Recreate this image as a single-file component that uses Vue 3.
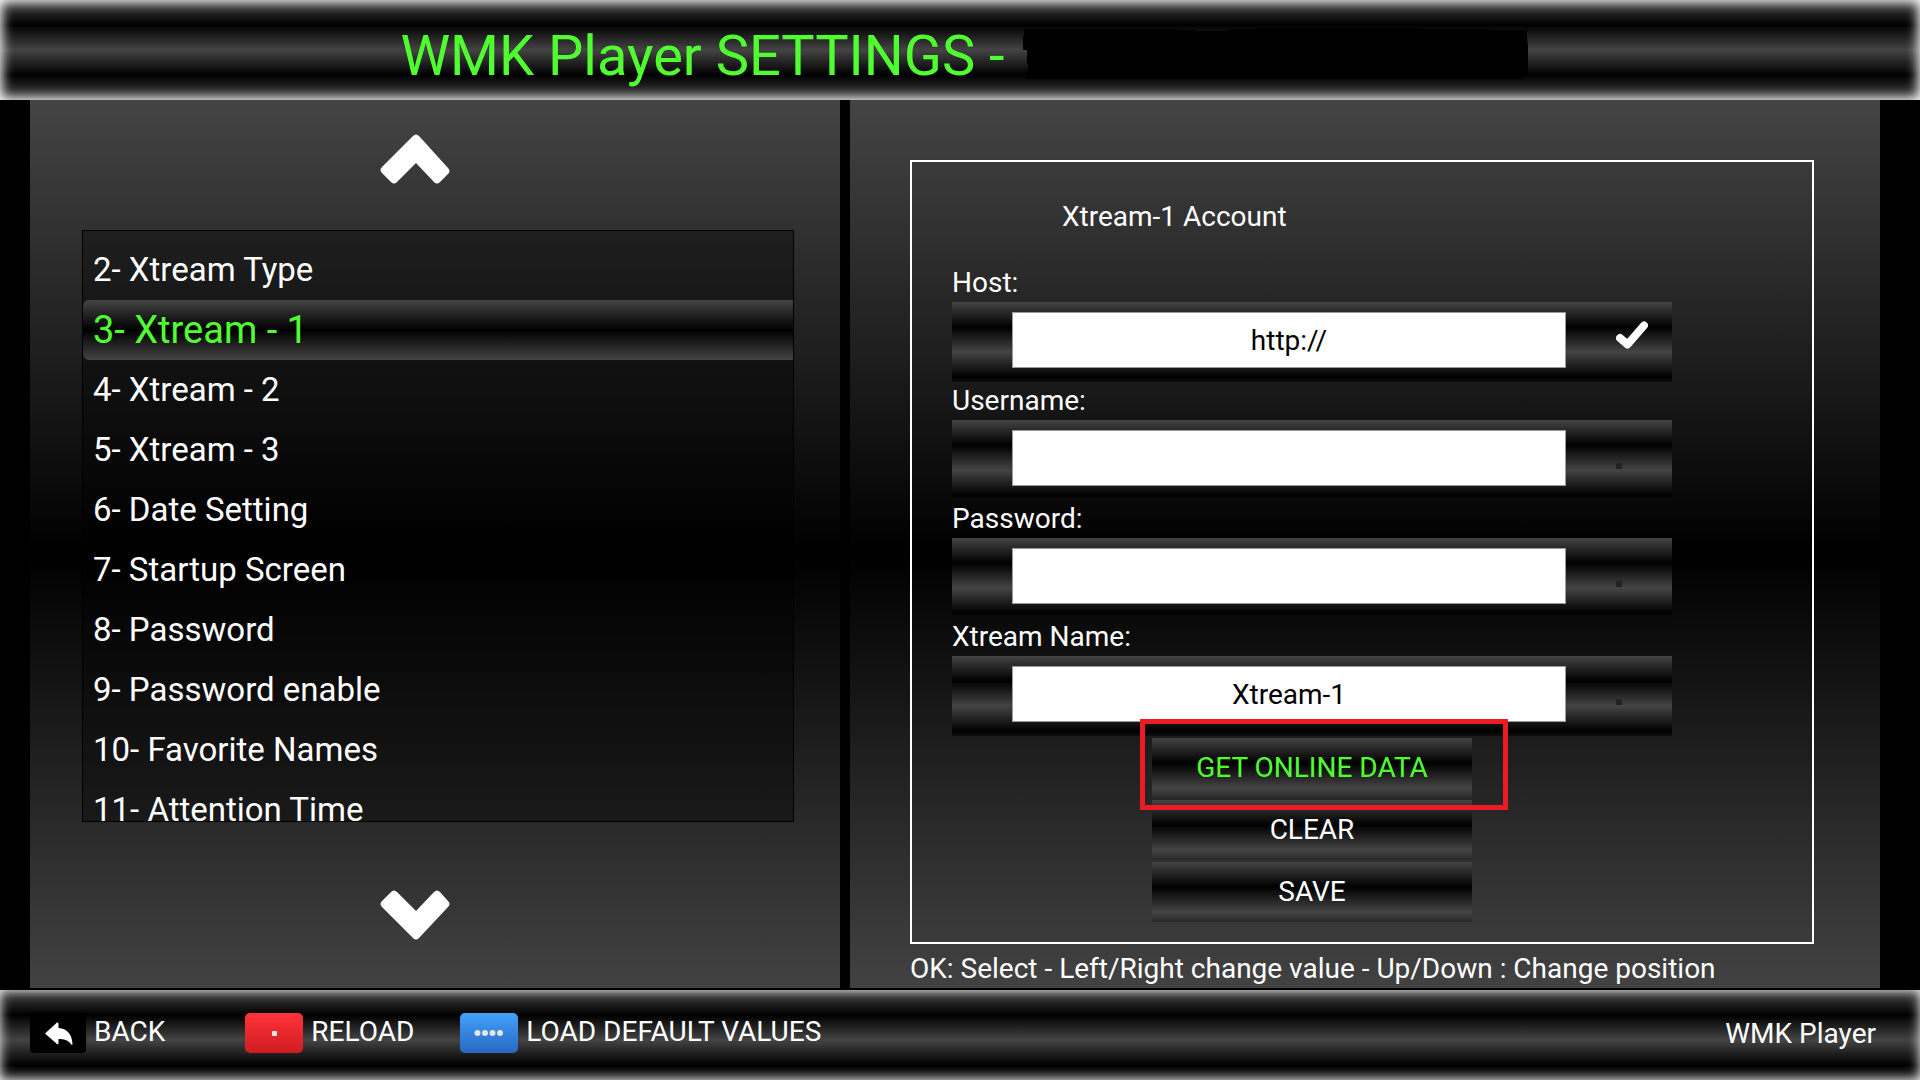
<script setup>
import { ref } from 'vue'

const items = [
  '2- Xtream Type',
  '3- Xtream - 1',
  '4- Xtream - 2',
  '5- Xtream - 3',
  '6- Date Setting',
  '7- Startup Screen',
  '8- Password',
  '9- Password enable',
  '10- Favorite Names',
  '11- Attention Time',
]
const selected = ref(1)

const fields = ref([
  { id: 'host', label: 'Host:', value: 'http://', checked: true },
  { id: 'username', label: 'Username:', value: '', checked: false },
  { id: 'password', label: 'Password:', value: '', checked: false },
  { id: 'name', label: 'Xtream Name:', value: 'Xtream-1', checked: false },
])
</script>

<template>
  <div class="screen">
    <header class="bar header">
      <h1>WMK Player SETTINGS -</h1>
      <svg class="redaction" viewBox="0 0 505 52" aria-hidden="true">
        <path d="M1 1H155V2H172V3H202V2H207V1H234V0H398V1H466V2H504V10L505 18V43Q503 48 498 51H3V43H5V36H4V22H0V8H1Z" fill="#000" />
      </svg>
    </header>

    <main class="panels">
      <section class="panel side">
        <button class="arrow" aria-label="Scroll up">
          <svg viewBox="0 0 70 50"><path d="M33 2Q36 -1 39 2L68 34Q71 37 68 40L60 48Q57 51 54 48L36 29L17 48Q14 51 11 48L2 39Q-1 36 2 33Z" /></svg>
        </button>
        <ul class="list">
          <li v-for="(item, i) in items" :key="item">
            <button class="item" :class="{ active: i === selected }" @click="selected = i">{{ item }}</button>
          </li>
        </ul>
        <button class="arrow" aria-label="Scroll down">
          <svg viewBox="0 0 70 50"><path d="M33 48Q36 51 39 48L68 17Q71 14 68 11L60 2Q57 -1 54 2L36 21L17 2Q14 -1 11 2L2 11Q-1 14 2 17Z" /></svg>
        </button>
      </section>

      <section class="panel detail">
        <form class="frame" @submit.prevent>
          <h2>Xtream-1 Account</h2>
          <div v-for="f in fields" :key="f.id" class="field">
            <label :for="f.id">{{ f.label }}</label>
            <div class="strip">
              <input :id="f.id" v-model="f.value" type="text" autocomplete="off" />
              <svg v-if="f.checked" class="tick" viewBox="0 0 32 28"><path d="M4 17L11.500 23.500L28 4.500" /></svg>
              <span v-else class="dot"></span>
            </div>
          </div>
          <div class="actions">
            <div class="marked">
              <button class="action active">GET ONLINE DATA</button>
            </div>
            <button class="action">CLEAR</button>
            <button class="action">SAVE</button>
          </div>
        </form>
        <p class="hint">OK: Select - Left/Right change value - Up/Down : Change position</p>
      </section>
    </main>

    <footer class="bar footer">
      <button class="key back">
        <svg viewBox="0 0 56 40">
          <rect width="56" height="40" rx="4" fill="#000" />
          <path d="M15 20.500L27 9.500Q28.500 9 28.500 11V15C37 15.500 42 21 42.500 31Q42 33 41 31C38 27 34 26 28.500 26V30Q28.500 32 27 31Z" fill="#fff" />
        </svg>
        <span>BACK</span>
      </button>
      <button class="key reload">
        <svg viewBox="0 0 58 40">
          <defs><linearGradient id="red" x2="0" y2="1"><stop stop-color="#ff343a" /><stop offset="1" stop-color="#cf1c20" /></linearGradient></defs>
          <rect width="58" height="40" rx="5" fill="url(#red)" />
          <rect x="27" y="18" width="5" height="5" rx="1" fill="#f0e4e4" />
        </svg>
        <span>RELOAD</span>
      </button>
      <button class="key">
        <svg viewBox="0 0 58 40">
          <defs><linearGradient id="blue" x2="0" y2="1"><stop stop-color="#42a2fb" /><stop offset="1" stop-color="#2868c2" /></linearGradient></defs>
          <rect width="58" height="40" rx="5" fill="url(#blue)" />
          <g fill="#e6e6e6"><circle cx="17.500" cy="20" r="3" /><circle cx="25" cy="20" r="3" /><circle cx="32.500" cy="20" r="3" /><circle cx="40" cy="20" r="3" /></g>
        </svg>
        <span>LOAD DEFAULT VALUES</span>
      </button>
      <span class="brand">WMK Player</span>
    </footer>
  </div>
</template>

<style>
body {
  margin: 0;
  background: #000;
}
</style>

<style scoped>
.screen {
  --strip: repeating-linear-gradient(#444 0, #000 25px, #444 50px);
  display: flex;
  flex-direction: column;
  min-height: 100vh;
  background: #000;
  color: #fff;
  font: 28px/38px Roboto, "Liberation Sans", sans-serif;
}
* {
  box-sizing: border-box;
}
button {
  padding: 0;
  border: 0;
  background: none;
  color: inherit;
  font: inherit;
  cursor: pointer;
}
svg {
  display: block;
}
.bar {
  display: flex;
  align-items: center;
  background: var(--strip);
}
.header {
  justify-content: center;
  gap: 18px;
  height: 100px;
  padding: 8px 0 0 8px;
  box-shadow: inset 0 0 12px 2px #fff;
}
h1 {
  margin: 0;
  padding-top: 4px;
  color: #50ff30;
  font-size: 56px;
  font-weight: 400;
  line-height: 88px;
  white-space: nowrap;
}
.redaction {
  width: 505px;
  height: 52px;
}
.panels {
  flex: 1;
  display: grid;
  grid-template-columns: 81fr 103fr;
  gap: 10px;
  padding: 0 40px 2px 30px;
}
.panel {
  display: flex;
  flex-direction: column;
  background: linear-gradient(#444, #000 51%, #424242);
}
.side {
  padding: 34px 46px 48px 52px;
}
.arrow {
  align-self: center;
  width: 70px;
  height: 50px;
  margin-right: 46px;
}
.arrow path {
  fill: #fff;
}
.list {
  flex: 1 1 0;
  min-height: 592px;
  max-height: 592px;
  margin: 46px 0 68px;
  padding: 9px 0 0;
  overflow: hidden;
  border: 1px solid #000;
  background: rgba(0, 0, 0, 0.36);
  list-style: none;
}
.item {
  display: block;
  width: 100%;
  height: 60px;
  padding-left: 10px;
  font-size: 33px;
  line-height: 60px;
  text-align: left;
}
.item.active {
  border-radius: 6px 0 0 6px;
  background: linear-gradient(#444, #000 50%, #444);
  color: #50ff30;
  font-size: 38px;
}
.detail {
  padding: 60px 66px 0 60px;
}
.frame {
  padding: 36px 40px 20px;
  border: 2px solid #fff;
}
h2 {
  margin: 0 0 28px;
  padding-left: 110px;
  font-size: 28px;
  font-weight: 400;
  line-height: 38px;
}
.field,
.actions {
  max-width: 720px;
}
label {
  display: block;
}
.strip {
  display: flex;
  align-items: flex-start;
  height: 80px;
  padding: 10px 24px 0 60px;
  background: var(--strip);
}
input {
  flex: 1;
  min-width: 0;
  height: 56px;
  padding: 0;
  border: 1px solid #999;
  border-radius: 0;
  outline: 0;
  background: #fff;
  color: #000;
  font: inherit;
  text-align: center;
}
.tick {
  width: 32px;
  height: 28px;
  margin: 9px 0 0 50px;
  fill: none;
  stroke: #fff;
  stroke-width: 8px;
  stroke-linecap: round;
  stroke-linejoin: round;
}
.dot {
  width: 6px;
  height: 6px;
  margin: 33px 26px 0 50px;
  background: #222;
}
.actions {
  display: flex;
  flex-direction: column;
  align-items: center;
  gap: 2px;
  margin-top: 2px;
}
.action {
  display: block;
  width: 320px;
  height: 60px;
  background: var(--strip);
}
.action.active {
  color: #50ff30;
}
.marked {
  position: relative;
}
.marked::after {
  content: "";
  position: absolute;
  inset: -19px -36px -12px -12px;
  border: 5px solid #ed1c24;
  pointer-events: none;
}
.hint {
  margin: 6px 0 0;
  line-height: 38px;
  white-space: nowrap;
}
.footer {
  align-items: flex-start;
  height: 90px;
  padding: 23px 44px 0 30px;
  box-shadow: inset 0 0 12px #fff;
}
.key {
  display: flex;
  gap: 8px;
  margin-right: 46px;
  white-space: nowrap;
}
.key svg {
  width: 58px;
  height: 40px;
}
.key.back {
  margin-right: 80px;
}
.key.back svg {
  width: 56px;
}
.brand {
  margin: 2px 0 0 auto;
}
</style>
